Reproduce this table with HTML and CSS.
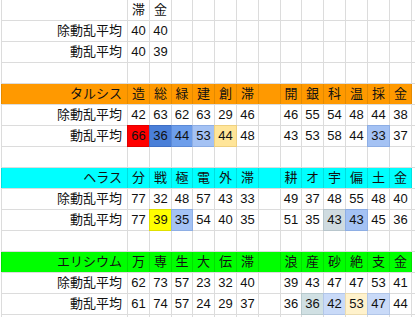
FILE: index.html
```html
<!DOCTYPE html>
<html lang="ja">
<head>
<meta charset="utf-8">
<link rel="stylesheet" href="styles.css">
</head>
<body>
<div class="sheet">
  <div class="row">
    <div class="c lbl"></div><div class="c">滞</div><div class="c">金</div><div class="c"></div><div class="c"></div><div class="c"></div><div class="c"></div><div class="c"></div><div class="c"></div><div class="c"></div><div class="c"></div><div class="c"></div><div class="c"></div><div class="c"></div><div class="c"></div>
  </div>
  <div class="row">
    <div class="c lbl">除動乱平均</div><div class="c">40</div><div class="c">40</div><div class="c"></div><div class="c"></div><div class="c"></div><div class="c"></div><div class="c"></div><div class="c"></div><div class="c"></div><div class="c"></div><div class="c"></div><div class="c"></div><div class="c"></div><div class="c"></div>
  </div>
  <div class="row">
    <div class="c lbl">動乱平均</div><div class="c">40</div><div class="c">39</div><div class="c"></div><div class="c"></div><div class="c"></div><div class="c"></div><div class="c"></div><div class="c"></div><div class="c"></div><div class="c"></div><div class="c"></div><div class="c"></div><div class="c"></div><div class="c"></div>
  </div>
  <div class="row">
    <div class="c lbl"></div><div class="c"></div><div class="c"></div><div class="c"></div><div class="c"></div><div class="c"></div><div class="c"></div><div class="c"></div><div class="c"></div><div class="c"></div><div class="c"></div><div class="c"></div><div class="c"></div><div class="c"></div><div class="c"></div>
  </div>

  <div class="row head orange">
    <div class="c lbl">タルシス</div><div class="c">造</div><div class="c">総</div><div class="c">緑</div><div class="c">建</div><div class="c">創</div><div class="c">滞</div><div class="c"></div><div class="c">開</div><div class="c">銀</div><div class="c">科</div><div class="c">温</div><div class="c">採</div><div class="c">金</div><div class="c end"></div>
  </div>
  <div class="row">
    <div class="c lbl">除動乱平均</div><div class="c">42</div><div class="c">63</div><div class="c">62</div><div class="c">63</div><div class="c">29</div><div class="c">46</div><div class="c"></div><div class="c">46</div><div class="c">55</div><div class="c">54</div><div class="c">48</div><div class="c">44</div><div class="c">38</div><div class="c"></div>
  </div>
  <div class="row">
    <div class="c lbl">動乱平均</div><div class="c red">66</div><div class="c blue3">36</div><div class="c blue2">44</div><div class="c blue1">53</div><div class="c amber">44</div><div class="c">48</div><div class="c"></div><div class="c">43</div><div class="c">53</div><div class="c">58</div><div class="c">44</div><div class="c blue1">33</div><div class="c">37</div><div class="c"></div>
  </div>
  <div class="row">
    <div class="c lbl"></div><div class="c"></div><div class="c"></div><div class="c"></div><div class="c"></div><div class="c"></div><div class="c"></div><div class="c"></div><div class="c"></div><div class="c"></div><div class="c"></div><div class="c"></div><div class="c"></div><div class="c"></div><div class="c"></div>
  </div>

  <div class="row head cyan">
    <div class="c lbl">ヘラス</div><div class="c">分</div><div class="c">戦</div><div class="c">極</div><div class="c">電</div><div class="c">外</div><div class="c">滞</div><div class="c"></div><div class="c">耕</div><div class="c">オ</div><div class="c">宇</div><div class="c">偏</div><div class="c">土</div><div class="c">金</div><div class="c end"></div>
  </div>
  <div class="row">
    <div class="c lbl">除動乱平均</div><div class="c">77</div><div class="c">32</div><div class="c">48</div><div class="c">57</div><div class="c">43</div><div class="c">33</div><div class="c"></div><div class="c">49</div><div class="c">37</div><div class="c">48</div><div class="c">55</div><div class="c">48</div><div class="c">40</div><div class="c"></div>
  </div>
  <div class="row">
    <div class="c lbl">動乱平均</div><div class="c">77</div><div class="c yellow">39</div><div class="c blue1">35</div><div class="c">54</div><div class="c">40</div><div class="c">35</div><div class="c"></div><div class="c">51</div><div class="c">35</div><div class="c grey">43</div><div class="c blue1">43</div><div class="c">45</div><div class="c">36</div><div class="c"></div>
  </div>
  <div class="row">
    <div class="c lbl"></div><div class="c"></div><div class="c"></div><div class="c"></div><div class="c"></div><div class="c"></div><div class="c"></div><div class="c"></div><div class="c"></div><div class="c"></div><div class="c"></div><div class="c"></div><div class="c"></div><div class="c"></div><div class="c"></div>
  </div>

  <div class="row head green">
    <div class="c lbl">エリシウム</div><div class="c">万</div><div class="c">専</div><div class="c">生</div><div class="c">大</div><div class="c">伝</div><div class="c">滞</div><div class="c"></div><div class="c">浪</div><div class="c">産</div><div class="c">砂</div><div class="c">絶</div><div class="c">支</div><div class="c">金</div><div class="c end"></div>
  </div>
  <div class="row">
    <div class="c lbl">除動乱平均</div><div class="c">62</div><div class="c">73</div><div class="c">57</div><div class="c">23</div><div class="c">32</div><div class="c">40</div><div class="c"></div><div class="c">39</div><div class="c">43</div><div class="c">47</div><div class="c">47</div><div class="c">53</div><div class="c">41</div><div class="c"></div>
  </div>
  <div class="row">
    <div class="c lbl">動乱平均</div><div class="c">61</div><div class="c">74</div><div class="c">57</div><div class="c">24</div><div class="c">29</div><div class="c">37</div><div class="c"></div><div class="c">36</div><div class="c grey2">36</div><div class="c pale">42</div><div class="c cream">53</div><div class="c pale">47</div><div class="c">44</div><div class="c"></div>
  </div>
  <div class="row">
    <div class="c lbl"></div><div class="c"></div><div class="c"></div><div class="c"></div><div class="c"></div><div class="c"></div><div class="c"></div><div class="c"></div><div class="c"></div><div class="c"></div><div class="c"></div><div class="c"></div><div class="c"></div><div class="c"></div><div class="c"></div>
  </div>
</div>
</body>
</html>
```

FILE: styles.css
```css
html, body {
  margin: 0;
  padding: 0;
  background: #ffffff;
  overflow: hidden;
}

.sheet {
  display: flex;
  flex-direction: column;
  gap: 1px;
  width: 414px;
  height: 317px;
  overflow: hidden;
  margin-left: 1px;
  background: #dcdcdc;
  font-family: "Liberation Sans", "Noto Sans CJK JP", sans-serif;
  font-size: 13px;
  color: #111111;
}

.row {
  display: grid;
  grid-template-columns: 125px 21px 21px 20px 21px 21px 21px 21px 20px 21px 21px 21px 21px 21px 10px;
  gap: 1px;
  padding-left: 1px;
  height: 20px;
  flex: none;
  background: #dcdcdc;
}

.c {
  background: #ffffff;
  line-height: 20px;
  text-align: center;
  white-space: nowrap;
}

.lbl {
  text-align: right;
  padding-right: 5px;
}

.head.orange { background: #e48a00; }
.head.orange .c { background: #ff9900; }
.head.cyan { background: #00e0e0; }
.head.cyan .c { background: #00ffff; }
.head.green { background: #00e000; }
.head.green .c { background: #00ff00; }
.head .c.end { background: #ffffff; }

.red { background: #ff0000; outline: 1px solid #e00000; }
.blue3 { background: #4a7fd8; outline: 1px solid #3f6fc4; }
.blue2 { background: #6d9eeb; outline: 1px solid #5c8ad6; }
.blue1 { background: #a4c2f4; outline: 1px solid #8eaee4; }
.amber { background: #ffe599; outline: 1px solid #eed080; }
.yellow { background: #ffff00; outline: 1px solid #e0e000; }
.grey { background: #cfdbe0; outline: 1px solid #b8c6cc; }
.grey2 { background: #d0e0e3; outline: 1px solid #b8cacd; }
.pale { background: #c9daf8; outline: 1px solid #b2c6e8; }
.cream { background: #fff2cc; outline: 1px solid #ecdcb0; }
```
